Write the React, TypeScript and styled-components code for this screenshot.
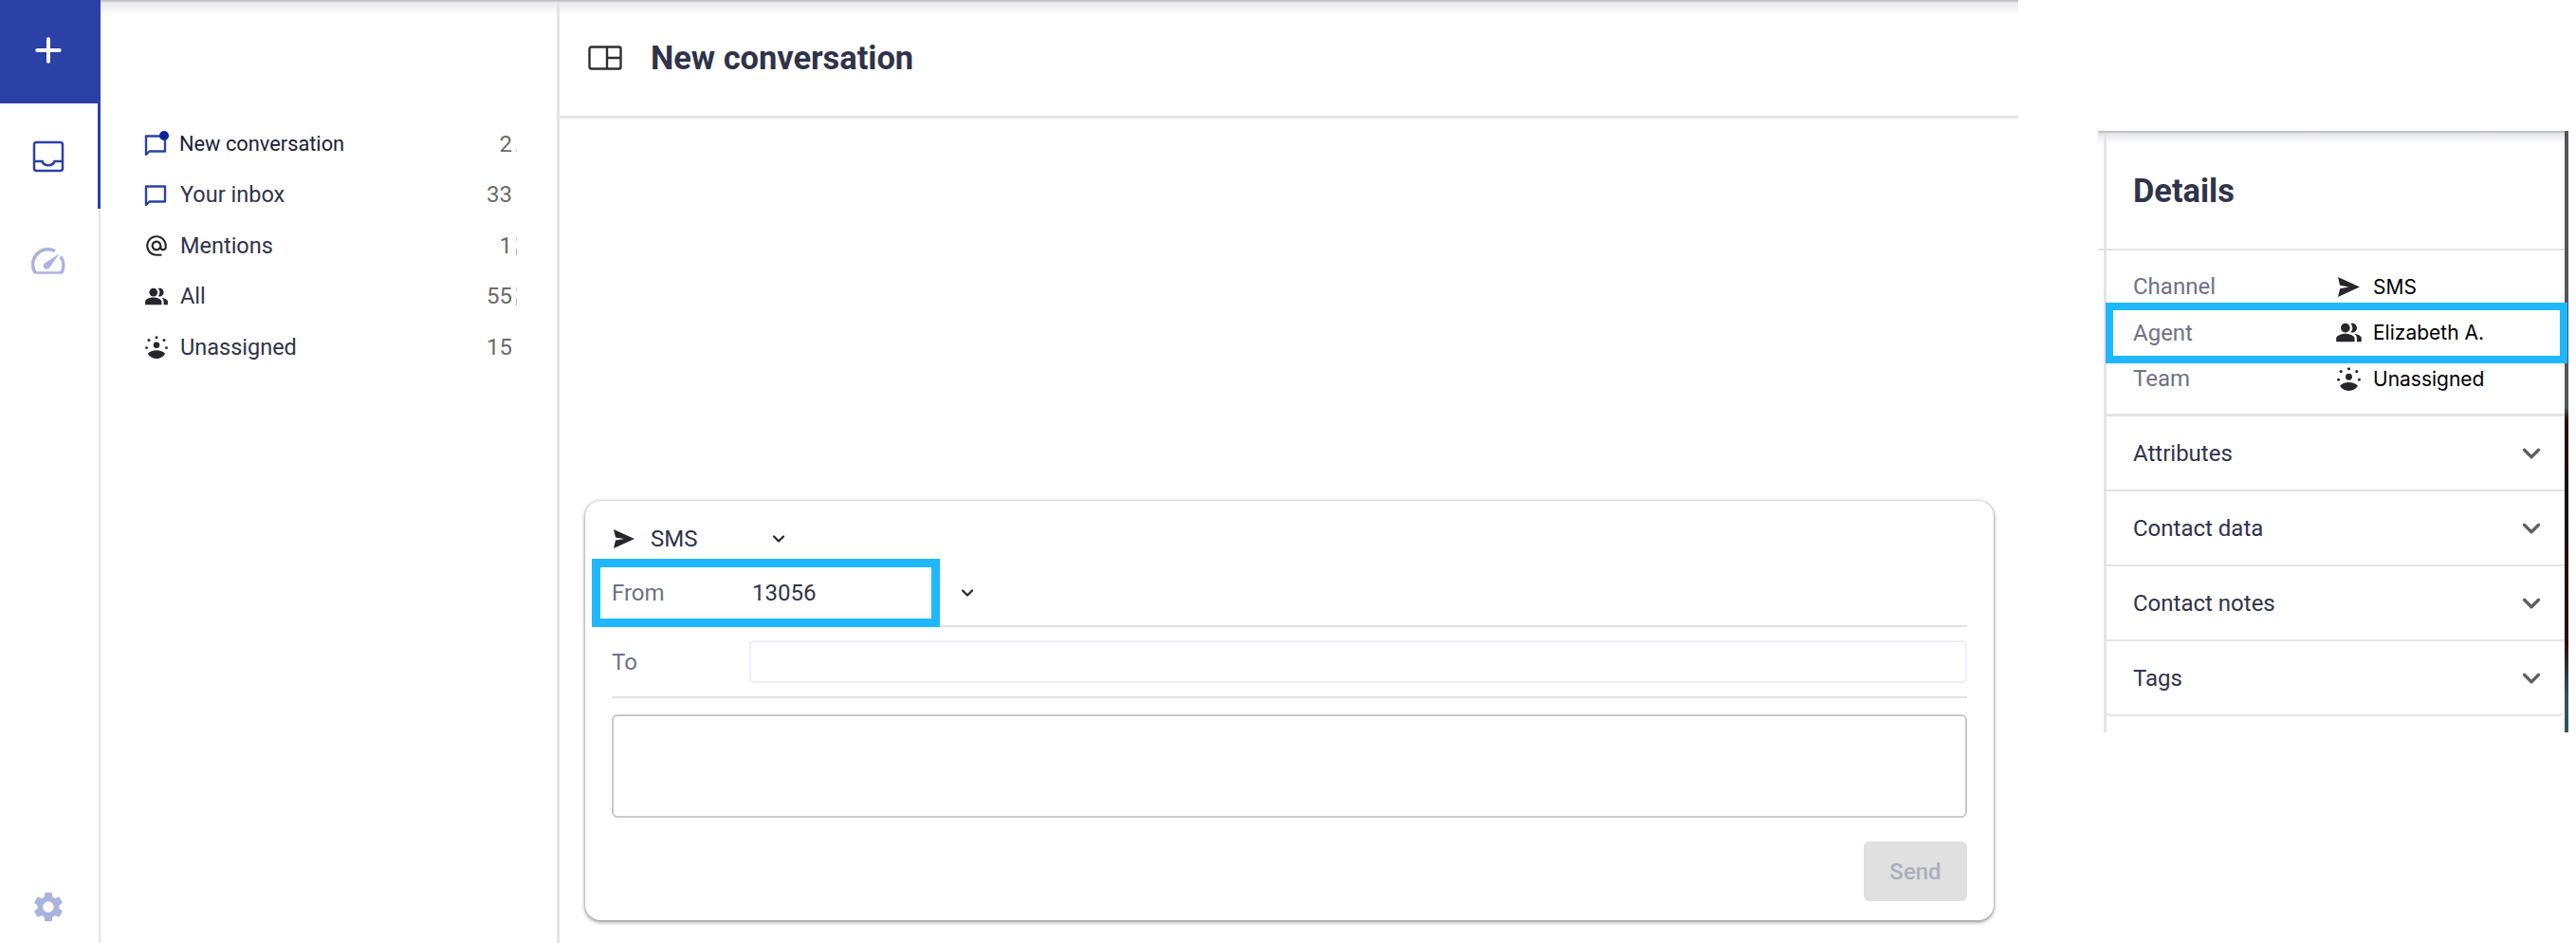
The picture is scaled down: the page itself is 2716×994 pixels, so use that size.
import React from "react";
import styled, { createGlobalStyle } from "styled-components";
import { ChevronDown, Plus } from "lucide-react";
import { MdAlternateEmail, MdPeopleAlt, MdSettings } from "react-icons/md";

const GlobalStyle = createGlobalStyle`
  html, body {
    margin: 0;
    padding: 0;
    background: #fff;
  }
  * { box-sizing: border-box; }
`;

function SendGlyph({ size = 24 }: { size?: number }) {
  return (
    <svg width={size} height={size} viewBox="0 0 24 24" fill="#26262b">
      <path d="M1 2 23 12 1 22l2-8.400L12 12 3 10.400z" />
    </svg>
  );
}

function UnassignedGlyph({ size = 24 }: { size?: number }) {
  return (
    <svg width={size} height={size} viewBox="0 0 24 24" fill="#26262b">
      <circle cx="12" cy="9.800" r="3.300" />
      <path d="M2.900 19c1.700-2.400 5.200-3.700 9.100-3.700s7.400 1.300 9.100 3.700c-1.700 2.900-5.200 5-9.100 5s-7.400-2.100-9.100-5z" />
      <circle cx="12" cy="1.700" r="1.500" />
      <circle cx="4" cy="4.400" r="1.500" />
      <circle cx="20" cy="4.400" r="1.500" />
      <circle cx="1.500" cy="12.700" r="1.400" />
      <circle cx="22.500" cy="12.700" r="1.400" />
    </svg>
  );
}

function ChatGlyph({ dot }: { dot?: boolean }) {
  return (
    <svg width="26" height="28" viewBox="0 0 26 28" fill="none">
      <path d="M2 5.500h20v16H5.500L2 25z" stroke="#2c41a6" strokeWidth="2.400" strokeLinejoin="round" />
      {dot && <circle cx="21" cy="5" r="5" fill="#12229a" />}
    </svg>
  );
}

function InboxGlyph() {
  return (
    <svg width="34" height="34" viewBox="0 0 34 34" fill="none" stroke="#2c41a6" strokeWidth="2.500">
      <rect x="2" y="2" width="30" height="30" rx="2.500" />
      <path d="M2 22h8.500c1 3 3.500 4.300 6.500 4.300s5.500-1.300 6.500-4.300H32" />
    </svg>
  );
}

function GaugeGlyph() {
  return (
    <svg width="36" height="29" viewBox="0 0 36 29" fill="none" stroke="#aab3de" strokeWidth="3.500">
      <path d="M4.500 27A16 16 0 0 1 25 3.600M31 9.500A16 16 0 0 1 31.500 27" />
      <path d="M4.500 26.500h27" strokeWidth="2.500" />
      <path d="M29.500 6.500 19.300 21.300a3.600 3.600 0 1 1-5-5z" fill="#aab3de" stroke="none" />
    </svg>
  );
}

function LayoutGlyph() {
  return (
    <svg width="36" height="26" viewBox="0 0 36 26" fill="none" stroke="#2f2f33" strokeWidth="2.400">
      <rect x="1.500" y="1.500" width="33" height="23" rx="2" />
      <path d="M20 1.500v23M20 13h14.500" />
    </svg>
  );
}

type NavItem = { label: string; count: string; marks?: number; icon: React.ReactNode; active?: boolean };

const navItems: NavItem[] = [
  { label: "New conversation", count: "2", marks: 1, icon: <ChatGlyph dot />, active: true },
  { label: "Your inbox", count: "33", icon: <ChatGlyph /> },
  { label: "Mentions", count: "1", marks: 2, icon: <MdAlternateEmail size={28} color="#26262b" /> },
  { label: "All", count: "55", marks: 2, icon: <MdPeopleAlt size={29} color="#26262b" /> },
  { label: "Unassigned", count: "15", icon: <UnassignedGlyph /> },
];

const sections = ["Attributes", "Contact data", "Contact notes", "Tags"];

export default function App() {
  return (
    <>
      <GlobalStyle />
      <Page>
        <Rail>
          <ComposeButton>
            <Plus size={40} color="#fff" strokeWidth={2.4} />
          </ComposeButton>
          <RailTab $active>
            <InboxGlyph />
          </RailTab>
          <RailTab>
            <GaugeGlyph />
          </RailTab>
          <RailFoot>
            <MdSettings size={38} color="#aab3de" />
          </RailFoot>
        </Rail>
        <Workspace>
          <Sidebar>
            <NavList>
              {navItems.map((item) => (
                <NavRow key={item.label}>
                  <NavIcon>{item.icon}</NavIcon>
                  <NavLabel $active={item.active}>{item.label}</NavLabel>
                  <NavCount>{item.count}</NavCount>
                  <NavTail $marks={item.marks ?? 0} />
                </NavRow>
              ))}
            </NavList>
          </Sidebar>
          <Main>
            <MainHeader>
              <LayoutGlyph />
              <Title>New conversation</Title>
            </MainHeader>
            <MainBody>
              <Composer>
                <ChannelRow>
                  <SendGlyph />
                  <ChannelName>SMS</ChannelName>
                  <ChevronDown size={20} color="#26262b" strokeWidth={2.6} />
                </ChannelRow>
                <FromRow>
                  <Highlight />
                  <FieldLabel>From</FieldLabel>
                  <FromValue>13056</FromValue>
                  <ChevronDown size={20} color="#26262b" strokeWidth={2.6} />
                </FromRow>
                <ToRow>
                  <FieldLabel>To</FieldLabel>
                  <ToInput />
                </ToRow>
                <MessageBox />
                <ComposerFooter>
                  <SendButton disabled>Send</SendButton>
                </ComposerFooter>
              </Composer>
            </MainBody>
          </Main>
        </Workspace>
        <PanelColumn>
          <DetailsPanel>
            <PanelHeader>Details</PanelHeader>
            <InfoList>
              <InfoRow>
                <InfoLabel>Channel</InfoLabel>
                <InfoIcon><SendGlyph size={25} /></InfoIcon>
                <InfoValue>SMS</InfoValue>
              </InfoRow>
              <InfoRow>
                <PanelHighlight />
                <InfoLabel>Agent</InfoLabel>
                <InfoIcon><MdPeopleAlt size={29} color="#26262b" /></InfoIcon>
                <InfoValue>Elizabeth A.</InfoValue>
              </InfoRow>
              <InfoRow>
                <InfoLabel>Team</InfoLabel>
                <InfoIcon><UnassignedGlyph size={25} /></InfoIcon>
                <InfoValue>Unassigned</InfoValue>
              </InfoRow>
            </InfoList>
            {sections.map((name) => (
              <SectionRow key={name}>
                <SectionName>{name}</SectionName>
                <ChevronDown size={30} color="#5f5f5f" strokeWidth={2.6} />
              </SectionRow>
            ))}
          </DetailsPanel>
        </PanelColumn>
      </Page>
    </>
  );
}

const Page = styled.div`
  display: flex;
  width: 2716px;
  height: 994px;
  overflow: hidden;
  background: #fff;
  font-family: Roboto, "Liberation Sans", sans-serif;
`;

const Rail = styled.nav`
  display: flex;
  flex-direction: column;
  flex: none;
  width: 106px;
  border-right: 2px solid #e4e4e6;
`;

const ComposeButton = styled.div`
  display: flex;
  align-items: center;
  justify-content: center;
  flex: none;
  width: 106px;
  height: 109px;
  padding: 0 4px 3px 0;
  background: #2c41a6;
`;

const RailTab = styled.div<{ $active?: boolean }>`
  display: flex;
  align-items: center;
  justify-content: center;
  flex: none;
  width: 106px;
  height: 111px;
  padding-right: 1px;
  border-right: 3px solid ${(p) => (p.$active ? "#2c41a6" : "transparent")};
`;

const RailFoot = styled.div`
  display: flex;
  justify-content: center;
  margin-top: auto;
  padding: 0 2px 19px 0;
`;

const Workspace = styled.div`
  position: relative;
  display: flex;
  flex: none;
  width: 2022px;

  &::before {
    content: "";
    position: absolute;
    inset: 0 0 auto 0;
    height: 16px;
    background: linear-gradient(#b4b5c0 0, rgba(228, 228, 234, 0.8) 3px, rgba(255, 255, 255, 0) 100%);
  }
`;

const Sidebar = styled.aside`
  flex: none;
  width: 484px;
  padding: 125px 0 0 46px;
  border-right: 3px solid #e4e4e6;
`;

const NavList = styled.div`
  display: flex;
  flex-direction: column;
`;

const NavRow = styled.div`
  display: flex;
  align-items: center;
  height: 53.5px;
`;

const NavIcon = styled.span`
  display: flex;
  align-items: center;
  justify-content: center;
  flex: none;
  width: 26px;
  margin-right: 12px;
`;

const NavLabel = styled.span<{ $active?: boolean }>`
  flex: none;
  width: 322px;
  font-size: ${(p) => (p.$active ? "21.8px" : "23.5px")};
  color: ${(p) => (p.$active ? "#1b1e38" : "#30334a")};
  margin-left: ${(p) => (p.$active ? "-1px" : "0")};
  margin-right: ${(p) => (p.$active ? "1px" : "0")};
`;

const NavCount = styled.span`
  flex: none;
  width: 28px;
  font-size: 24px;
  text-align: right;
  color: #6b6b6b;
`;

// slivers of the next digit, cut off by the column edge
const NavTail = styled.span<{ $marks: number }>`
  flex: none;
  width: 1px;
  height: 24px;
  margin-left: 4px;
  background:
    ${(p) =>
      p.$marks > 1
        ? "linear-gradient(#c8c8d0, #c8c8d0) 0 3px / 100% 4px no-repeat, linear-gradient(#b4b4c0, #b4b4c0) 0 15px / 100% 7px no-repeat"
        : p.$marks === 1
          ? "linear-gradient(#d4d4dc, #d4d4dc) 0 17px / 100% 3px no-repeat"
          : "none"};
`;

const Main = styled.main`
  display: flex;
  flex-direction: column;
  flex: 1;
`;

const MainHeader = styled.header`
  display: flex;
  align-items: center;
  flex: none;
  height: 125px;
  padding: 0 0 0 30px;
  border-bottom: 3px solid #e4e4e6;
`;

const Title = styled.h1`
  margin: 0 0 0 30px;
  font-size: 34.4px;
  font-weight: 700;
  color: #30334a;
`;

const MainBody = styled.div`
  display: flex;
  flex: 1;
  align-items: flex-end;
  padding: 0 26px 24px 27px;
`;

const Composer = styled.section`
  flex: 1;
  height: 442px;
  padding: 0 28px;
  border-radius: 16px;
  background: #fff;
  box-shadow: 0 2px 4px 0 rgba(70, 70, 85, 0.55), 0 0 3px rgba(90, 90, 105, 0.4);
`;

const ChannelRow = styled.div`
  display: flex;
  align-items: center;
  height: 62px;
  padding: 18px 0 0 1px;

  svg:last-child {
    margin-left: -2px;
  }
`;

const ChannelName = styled.span`
  width: 127px;
  margin-left: 16px;
  font-size: 24px;
  color: #30334a;
`;

const FromRow = styled.div`
  position: relative;
  display: flex;
  align-items: center;
  height: 71px;
  border-bottom: 2px solid #e2e2e4;

  svg {
    margin-left: 150px;
  }
`;

const Highlight = styled.span`
  position: absolute;
  left: -21px;
  top: -1px;
  width: 367px;
  height: 72px;
  border: 9px solid #1fb8ff;
`;

const FieldLabel = styled.span`
  flex: none;
  width: 148px;
  font-size: 24px;
  color: #6f7186;
`;

const FromValue = styled.span`
  font-size: 24px;
  color: #30334a;
`;

const ToRow = styled.div`
  display: flex;
  align-items: center;
  height: 75px;
  border-bottom: 2px solid #e2e2e4;
`;

const ToInput = styled.div`
  flex: 1;
  height: 45px;
  margin-left: -3px;
  border: 2px solid #eeeef8;
  border-radius: 5px;
`;

const MessageBox = styled.div`
  height: 109px;
  margin-top: 17px;
  border: 2px solid #c9c9cb;
  border-radius: 6px;
`;

const ComposerFooter = styled.div`
  display: flex;
  justify-content: flex-end;
  margin-top: 25px;
`;

const SendButton = styled.button`
  width: 109px;
  height: 63px;
  border: 0;
  border-radius: 6px;
  background: #e0e0e0;
  font-family: inherit;
  font-size: 24px;
  font-weight: 500;
  color: #adaeba;
`;

const PanelColumn = styled.div`
  flex: none;
  width: 588px;
  padding: 138px 0 0 84px;
`;

const DetailsPanel = styled.aside`
  position: relative;
  width: 496px;
  height: 634px;
  padding-left: 8px;
  background: linear-gradient(#e4e4e6, #e4e4e6) 6px 0 / 3px 100% no-repeat;
  border-right: 4px solid #141414;
  border-image: linear-gradient(
      #55555a 0,
      #55555a 46%,
      #2a1012 48%,
      #141414 60%,
      #2a1012 85%,
      #2f5560 94%,
      #2f5560 100%
    )
    1;

  &::before {
    content: "";
    position: absolute;
    inset: 0 0 auto 0;
    height: 14px;
    background: linear-gradient(#aeb0b8 0, #e6e6ea 3px, rgba(255, 255, 255, 0) 100%);
  }
`;

const PanelHeader = styled.h2`
  display: flex;
  align-items: center;
  height: 126px;
  margin: 0 0 0 -8px;
  padding: 1px 0 0 37px;
  border-bottom: 2px solid #e4e4e6;
  font-size: 34.4px;
  font-weight: 700;
  color: #30334a;
`;

const InfoList = styled.div`
  height: 175px;
  padding-top: 14px;
  border-bottom: 3px solid #e4e4e6;
`;

const InfoRow = styled.div`
  position: relative;
  display: flex;
  align-items: center;
  height: 48.5px;
  padding-left: 29px;
`;

const PanelHighlight = styled.span`
  position: absolute;
  left: 0;
  right: -3px;
  top: -8px;
  height: 64px;
  border: 8px solid #1fb8ff;
`;

const InfoLabel = styled.span`
  flex: none;
  width: 213px;
  font-size: 24px;
  color: #6f7186;
`;

const InfoIcon = styled.span`
  display: flex;
  justify-content: center;
  flex: none;
  width: 29px;
  margin-right: 11px;
`;

const InfoValue = styled.span`
  font-family: Inter, "Liberation Sans", sans-serif;
  font-size: 21px;
  color: #000;
`;

const SectionRow = styled.div`
  display: flex;
  align-items: center;
  justify-content: space-between;
  height: 79px;
  padding: 0 20px 0 29px;
  border-bottom: 2px solid #e4e4e6;

  &:last-child {
    border-radius: 0 0 6px 6px;
  }
`;

const SectionName = styled.span`
  font-size: 24px;
  color: #30334a;
`;
